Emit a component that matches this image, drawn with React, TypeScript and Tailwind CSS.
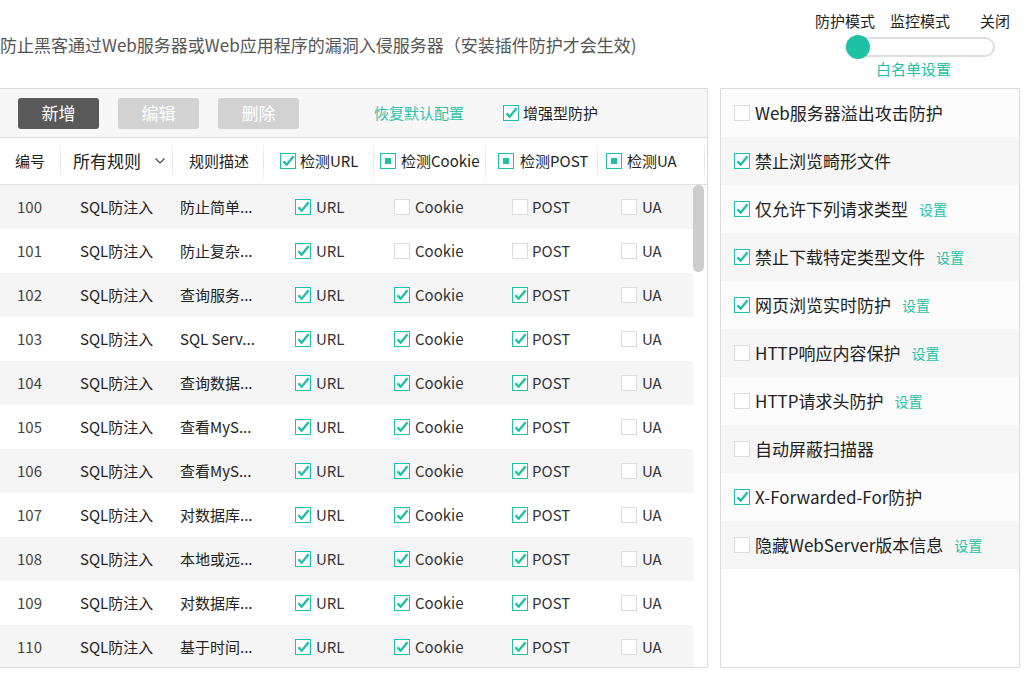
import React from 'react';

type CheckState = 'on' | 'off' | 'part';

const TEAL = '#1ec1a4';

const Box: React.FC<{ state: CheckState }> = ({ state }) => {
  if (state === 'off') {
    return <span className="inline-block w-4 h-4 shrink-0 border border-[#dcdcdc] bg-white" />;
  }
  if (state === 'part') {
    return (
      <span className="inline-flex w-4 h-4 shrink-0 items-center justify-center border border-[#1ec1a4] bg-white">
        <span className="block w-[6px] h-[6px] bg-[#1ec1a4]" />
      </span>
    );
  }
  return (
    <span className="relative inline-block w-4 h-4 shrink-0 border border-[#1ec1a4] bg-white">
      <svg width="16" height="16" viewBox="0 0 16 16" className="absolute -left-px -top-px">
        <path d="M3.5 8.2 L6.6 11.8 L13.6 3.2" fill="none" stroke={TEAL} strokeWidth="2.4" strokeLinejoin="round" />
      </svg>
    </span>
  );
};

const rules = [
  { id: 100, desc: '防止简单...', full: false },
  { id: 101, desc: '防止复杂...', full: false },
  { id: 102, desc: '查询服务...', full: true },
  { id: 103, desc: 'SQL Serv...', full: true },
  { id: 104, desc: '查询数据...', full: true },
  { id: 105, desc: '查看MyS...', full: true },
  { id: 106, desc: '查看MyS...', full: true },
  { id: 107, desc: '对数据库...', full: true },
  { id: 108, desc: '本地或远...', full: true },
  { id: 109, desc: '对数据库...', full: true },
  { id: 110, desc: '基于时间...', full: true },
];

const options = [
  { label: 'Web服务器溢出攻击防护', on: false, set: false },
  { label: '禁止浏览畸形文件', on: true, set: false },
  { label: '仅允许下列请求类型', on: true, set: true },
  { label: '禁止下载特定类型文件', on: true, set: true },
  { label: '网页浏览实时防护', on: true, set: true },
  { label: 'HTTP响应内容保护', on: false, set: true },
  { label: 'HTTP请求头防护', on: false, set: true },
  { label: '自动屏蔽扫描器', on: false, set: false },
  { label: 'X-Forwarded-For防护', on: true, set: false },
  { label: '隐藏WebServer版本信息', on: false, set: true },
];

const Divider = () => (
  <div className="w-px self-stretch shrink-0 bg-gradient-to-b from-white via-[#e2e2e2] to-white" />
);

export default function App() {
  return (
    <div className="w-[1025px] h-[674px] overflow-hidden bg-white text-[#333] font-['Noto_Sans_CJK_SC','Noto_Sans',sans-serif]">
      {/* Header */}
      <div className="flex h-[88px] justify-between">
        <div className="pt-[33px] text-[17px] leading-6 text-[#555] whitespace-nowrap">
          防止黑客通过Web服务器或Web应用程序的漏洞入侵服务器（安装插件防护才会生效)
        </div>
        <div className="w-[200px] mr-[10px] pt-[11px] text-[15px] leading-5">
          <div className="flex whitespace-nowrap text-[#222]">
            <span>防护模式</span>
            <span className="ml-[15px]">监控模式</span>
            <span className="ml-[30px]">关闭</span>
          </div>
          <div className="relative ml-[30px] mt-[6px] w-[150px] h-[20px] rounded-full border-2 border-[#dedede] bg-white">
            <span className="absolute -left-[1px] -top-[4px] w-[24px] h-[24px] rounded-full bg-[#1ec1a4]" />
          </div>
          <div className="ml-[61px] mt-[2px] text-[#1ec1a4]">白名单设置</div>
        </div>
      </div>

      {/* Body */}
      <div className="flex h-[580px]">
        {/* Left: rule table */}
        <div className="w-[708px] flex flex-col border-y border-r border-[#dcdcdc]">
          <div className="h-[49px] shrink-0 flex items-center bg-[#f7f7f7] border-b border-[#e0e0e0] pl-[18px] text-[17px]">
            <button className="w-[81px] h-[31px] rounded-[3px] bg-[#595959] text-white">新增</button>
            <button className="ml-[19px] w-[81px] h-[31px] rounded-[3px] bg-[#d2d2d2] text-white">编辑</button>
            <button className="ml-[19px] w-[81px] h-[31px] rounded-[3px] bg-[#d2d2d2] text-white">删除</button>
            <span className="ml-[75px] text-[15px] text-[#2fc2a7]">恢复默认配置</span>
            <span className="ml-[39px] flex items-center gap-[4px] text-[15px] text-[#222]">
              <Box state="on" />
              增强型防护
            </span>
          </div>

          <div className="h-[47px] shrink-0 flex border-b border-[#e0e0e0] text-[15px] text-[#222] whitespace-nowrap">
            <div className="w-[60px] flex items-center pl-[15px]">编号</div>
            <Divider />
            <div className="w-[111px] flex items-center pl-[12px] text-[17px]">
              所有规则
              <svg width="10" height="6" viewBox="0 0 10 6" className="ml-[14px]">
                <path d="M0.5 0.5 L5 5 L9.5 0.5" fill="none" stroke="#444" strokeWidth="1.2" />
              </svg>
            </div>
            <Divider />
            <div className="w-[90px] flex items-center pl-[16px]">规则描述</div>
            <Divider />
            <div className="w-[109px] flex items-center gap-[4px] pl-[16px]"><Box state="on" />检测URL</div>
            <Divider />
            <div className="w-[111px] flex items-center gap-[5px] pl-[6px]"><Box state="part" />检测Cookie</div>
            <Divider />
            <div className="w-[111px] flex items-center gap-[6px] pl-[12px]"><Box state="part" />检测POST</div>
            <Divider />
            <div className="w-[106px] flex items-center gap-[5px] pl-[8px]"><Box state="part" />检测UA</div>
            <Divider />
          </div>

          <div className="flex-1 flex overflow-hidden">
            <div className="w-[693px]">
              {rules.map((r, i) => (
                <div
                  key={r.id}
                  className={`h-[44px] flex items-center text-[15px] whitespace-nowrap ${i % 2 === 0 ? 'bg-[#f5f5f5]' : 'bg-white'}`}
                >
                  <div className="w-[80px] pl-[17px] text-[#444]">{r.id}</div>
                  <div className="w-[100px] text-[#222]">SQL防注入</div>
                  <div className="w-[115px] text-[#222]">{r.desc}</div>
                  <div className="w-[99px] flex items-center gap-[5px]"><Box state="on" />URL</div>
                  <div className="w-[118px] flex items-center gap-[5px]"><Box state={r.full ? 'on' : 'off'} />Cookie</div>
                  <div className="w-[109px] flex items-center gap-[4px]"><Box state={r.full ? 'on' : 'off'} />POST</div>
                  <div className="flex items-center gap-[5px]"><Box state="off" />UA</div>
                </div>
              ))}
            </div>
            <div className="flex-1">
              <div className="w-[11px] h-[87px] rounded-[5px] bg-[#cdcdcd]" />
            </div>
          </div>
        </div>

        {/* Right: options */}
        <div className="ml-[12px] w-[300px] border border-[#dcdcdc] bg-white">
          {options.map((o, i) => (
            <div
              key={o.label}
              className={`h-[48px] flex items-center pl-[13px] whitespace-nowrap ${i % 2 === 0 ? 'bg-[#fcfcfc]' : 'bg-[#f6f6f6]'}`}
            >
              <Box state={o.on ? 'on' : 'off'} />
              <span className="ml-[5px] text-[17px] text-[#222]">{o.label}</span>
              {o.set && <span className="ml-[11px] text-[14px] text-[#1ec1a4]">设置</span>}
            </div>
          ))}
        </div>
      </div>
    </div>
  );
}
